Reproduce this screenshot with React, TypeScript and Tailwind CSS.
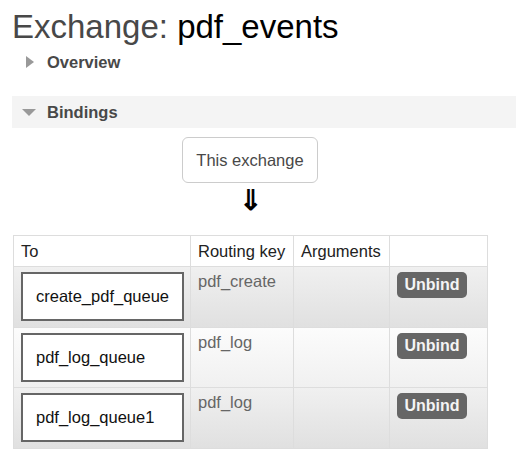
import React from 'react'

const bindings = [
  { queue: 'create_pdf_queue', key: 'pdf_create', odd: true },
  { queue: 'pdf_log_queue', key: 'pdf_log', odd: false },
  { queue: 'pdf_log_queue1', key: 'pdf_log', odd: true },
]

export default function App() {
  return (
    <div className="w-[516px] h-[463px] bg-white overflow-hidden" style={{ fontFamily: '"Liberation Sans", Arial, sans-serif' }}>
      <h1 className="pl-[12px] pt-[8px] text-[33px] leading-[38px] text-[#484848]">
        Exchange: <span className="text-black">pdf_events</span>
      </h1>

      <div className="mt-[6px] flex items-center pl-[26px] h-[20px]">
        <span className="w-0 h-0 border-y-[6px] border-y-transparent border-l-[8px] border-l-[#999]" />
        <span className="ml-[13px] text-[16.5px] font-bold text-[#484848]">Overview</span>
      </div>

      <div className="mt-[24px] ml-[12px] h-[32px] bg-[#f4f4f4] flex items-center pl-[10px]">
        <span className="w-0 h-0 border-x-[7px] border-x-transparent border-t-[7px] border-t-[#999]" />
        <span className="ml-[11px] text-[16.5px] font-bold text-[#484848]">Bindings</span>
      </div>

      <div className="flex flex-col items-center w-[500px] mt-[9px]">
        <div className="w-[136px] h-[46px] rounded-[6px] border border-[#ccc] flex items-center justify-center text-[16.5px] text-[#484848]">
          This exchange
        </div>
        <div className="h-[36px] text-[28px] leading-[36px] font-bold text-black">⇓</div>
      </div>

      <table className="ml-[13px] mt-[16px] border-collapse border border-[#ddd] text-[16.5px]">
        <thead>
          <tr className="h-[31px] bg-white text-[#222]">
            <th className="w-[177px] border border-[#ddd] text-left font-normal pl-[7px]">To</th>
            <th className="w-[103px] border border-[#ddd] text-left font-normal pl-[7px]">Routing key</th>
            <th className="w-[96px] border border-[#ddd] text-left font-normal pl-[7px]">Arguments</th>
            <th className="w-[98px] border border-[#ddd]"></th>
          </tr>
        </thead>
        <tbody>
          {bindings.map((b) => (
            <tr
              key={b.queue}
              className={
                b.odd
                  ? 'h-[61px] bg-gradient-to-b from-[#f0f0f0] to-[#e0e0e0]'
                  : 'h-[60px] bg-gradient-to-b from-[#fcfcfc] to-[#f0f0f0]'
              }
            >
              <td className="border border-[#ddd] pl-[7px] align-top pt-[5px]">
                <div className="w-[163px] h-[49px] bg-white border-2 border-[#666] flex items-center pl-[13px] text-[#111]">
                  {b.queue}
                </div>
              </td>
              <td className="border border-[#ddd] align-top pl-[7px] pt-[2px] text-[#666]">{b.key}</td>
              <td className="border border-[#ddd]"></td>
              <td className="border border-[#ddd] align-top pl-[7px] pt-[5px]">
                <button className="h-[26px] w-[70px] rounded-[5px] bg-[#666] text-[#f4f4f4] font-bold text-[16px] leading-[26px]">
                  Unbind
                </button>
              </td>
            </tr>
          ))}
        </tbody>
      </table>
    </div>
  )
}
